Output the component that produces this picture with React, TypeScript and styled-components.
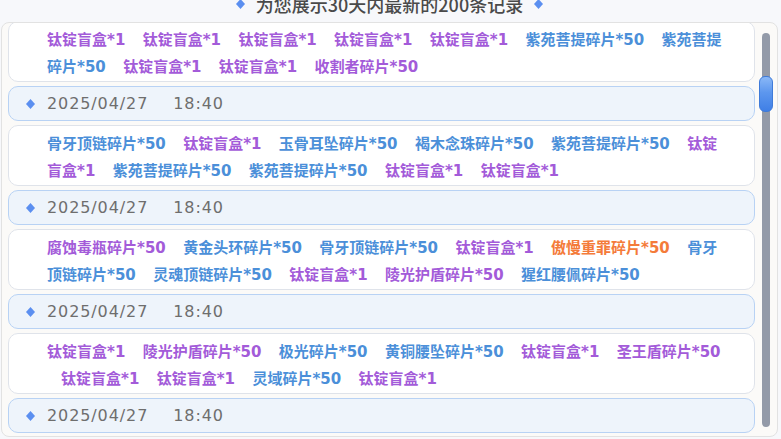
import { FC, Fragment, useEffect, useRef } from 'react';
import styled, { createGlobalStyle } from 'styled-components';

type Tone = 'purple' | 'blue' | 'orange';

interface Reward {
  name: string;
  qty: number;
  tone: Tone;
}

interface RecordEntry {
  date: string;
  time: string;
  rewards: Reward[];
}

const toneColor: Record<Tone, string> = {
  purple: '#a35bd9',
  blue: '#4b8fd9',
  orange: '#f47b3a',
};

const box = (qty = 1): Reward => ({ name: '钛锭盲盒', qty, tone: 'purple' });
const shard = (name: string, tone: Tone = 'blue'): Reward => ({ name, qty: 50, tone });

const records: RecordEntry[] = [
  {
    date: '2025/04/27',
    time: '18:40',
    rewards: [
      box(), box(), box(), box(), box(),
      shard('紫苑菩提碎片'), shard('紫苑菩提碎片'),
      box(), box(),
      shard('收割者碎片', 'purple'),
    ],
  },
  {
    date: '2025/04/27',
    time: '18:40',
    rewards: [
      shard('骨牙顶链碎片'), box(), shard('玉骨耳坠碎片'), shard('褐木念珠碎片'),
      shard('紫苑菩提碎片'), box(), shard('紫苑菩提碎片'), shard('紫苑菩提碎片'),
      box(), box(),
    ],
  },
  {
    date: '2025/04/27',
    time: '18:40',
    rewards: [
      shard('腐蚀毒瓶碎片', 'purple'), shard('黄金头环碎片'), shard('骨牙顶链碎片'), box(),
      shard('傲慢重罪碎片', 'orange'), shard('骨牙顶链碎片'), shard('灵魂顶链碎片'), box(),
      shard('陵光护盾碎片', 'purple'), shard('猩红腰佩碎片'),
    ],
  },
  {
    date: '2025/04/27',
    time: '18:40',
    rewards: [
      box(), shard('陵光护盾碎片', 'purple'), shard('极光碎片'), shard('黄铜腰坠碎片'),
      box(), shard('圣王盾碎片', 'purple'), box(), box(), shard('灵域碎片'), box(),
    ],
  },
  {
    date: '2025/04/27',
    time: '18:40',
    rewards: [box(), shard('紫苑菩提碎片'), box(), shard('极光碎片'), box()],
  },
];

// first record header sits just above the visible area
const INITIAL_SCROLL = 47;

const GlobalStyle = createGlobalStyle`
  html, body {
    margin: 0;
    padding: 0;
    background: #f7f8fb;
    overflow: hidden;
  }
  * {
    box-sizing: border-box;
  }
`;

const Diamond: FC = () => (
  <svg width={9} height={10} viewBox="0 0 9 10">
    <path d="M4.5 0 L9 5 L4.5 10 L0 5 Z" fill="#5b8ff0" />
  </svg>
);

const RewardLine: FC<{ rewards: Reward[] }> = ({ rewards }) => (
  <Card>
    {rewards.map((r, i) => (
      <Fragment key={i}>
        {i > 0 && ' '}
        <Item tone={r.tone}>
          {r.name}
          <Qty>*{r.qty}</Qty>
        </Item>
      </Fragment>
    ))}
  </Card>
);

const App: FC = () => {
  const viewRef = useRef<HTMLDivElement>(null);

  useEffect(() => {
    if (viewRef.current) viewRef.current.scrollTop = INITIAL_SCROLL;
  }, []);

  return (
    <Page>
      <GlobalStyle />
      <Header>
        <Diamond />
        <span>为您展示30天内最新的200条记录</span>
        <Diamond />
      </Header>
      <Panel>
        <Viewport ref={viewRef}>
          <List>
            {records.map((rec, i) => (
              <Fragment key={i}>
                <DateRow>
                  <Diamond />
                  <DateText>{rec.date}</DateText>
                  <TimeText>{rec.time}</TimeText>
                </DateRow>
                <RewardLine rewards={rec.rewards} />
              </Fragment>
            ))}
          </List>
        </Viewport>
        <Rail>
          <Track>
            <Thumb />
          </Track>
        </Rail>
      </Panel>
    </Page>
  );
};

const Page = styled.div`
  width: 781px;
  height: 439px;
  padding: 0 3px 0 1px;
  display: flex;
  flex-direction: column;
`;

const Header = styled.div`
  height: 24px;
  margin-top: -8px;
  display: flex;
  align-items: center;
  justify-content: center;
  gap: 11px;
  font-family: 'Noto Sans CJK SC', sans-serif;
  font-size: 18px;
  font-weight: 500;
  color: #4a4a4a;
  white-space: nowrap;
`;

const Panel = styled.div`
  margin-top: 6px;
  height: 415px;
  display: flex;
  background: #fbfaf8;
  border: 1px solid #e2e2e2;
  border-radius: 8px;
  overflow: hidden;
`;

const Viewport = styled.div`
  flex: 1;
  overflow-y: scroll;
  scrollbar-width: none;
  &::-webkit-scrollbar {
    display: none;
  }
`;

const List = styled.div`
  display: flex;
  flex-direction: column;
  gap: 4px;
  padding: 6px 0 6px 6px;
`;

const DateRow = styled.div`
  height: 35px;
  flex-shrink: 0;
  display: flex;
  align-items: center;
  gap: 12px;
  padding-left: 17px;
  background: #eef4fb;
  border: 1px solid #b8d2f4;
  border-radius: 10px;
`;

const DateText = styled.span`
  font-family: 'DejaVu Sans', sans-serif;
  font-size: 16px;
  letter-spacing: 0.9px;
  color: #6e6e6e;
`;

const TimeText = styled(DateText)`
  margin-left: 13px;
`;

const Card = styled.div`
  height: 61px;
  flex-shrink: 0;
  padding: 3px 24px 2px 38px;
  background: #ffffff;
  border: 1px solid #dfe3ea;
  border-radius: 10px;
  font-family: 'Noto Sans CJK SC', sans-serif;
  font-size: 15px;
  line-height: 27px;
`;

const Item = styled.span<{ tone: Tone }>`
  margin-left: 14px;
  color: ${(p) => toneColor[p.tone]};
  font-weight: 700;
  &:first-child {
    margin-left: 0;
  }
`;

const Qty = styled.span`
  font-family: 'DejaVu Sans', sans-serif;
  font-weight: 700;
  line-height: 1;
  white-space: nowrap;
`;

const Rail = styled.div`
  width: 22px;
  flex-shrink: 0;
  padding: 10px 0 9px 7px;
`;

const Track = styled.div`
  position: relative;
  width: 8px;
  height: 100%;
  background: #939aa8;
  border-radius: 4px;
`;

const Thumb = styled.div`
  position: absolute;
  top: 43px;
  left: -3px;
  width: 14px;
  height: 36px;
  border-radius: 6px;
  border: 1px solid #3f7bd9;
  background: linear-gradient(180deg, #8ab8f7 0%, #5d97ee 45%, #3f7fe6 100%);
`;

export default App;
